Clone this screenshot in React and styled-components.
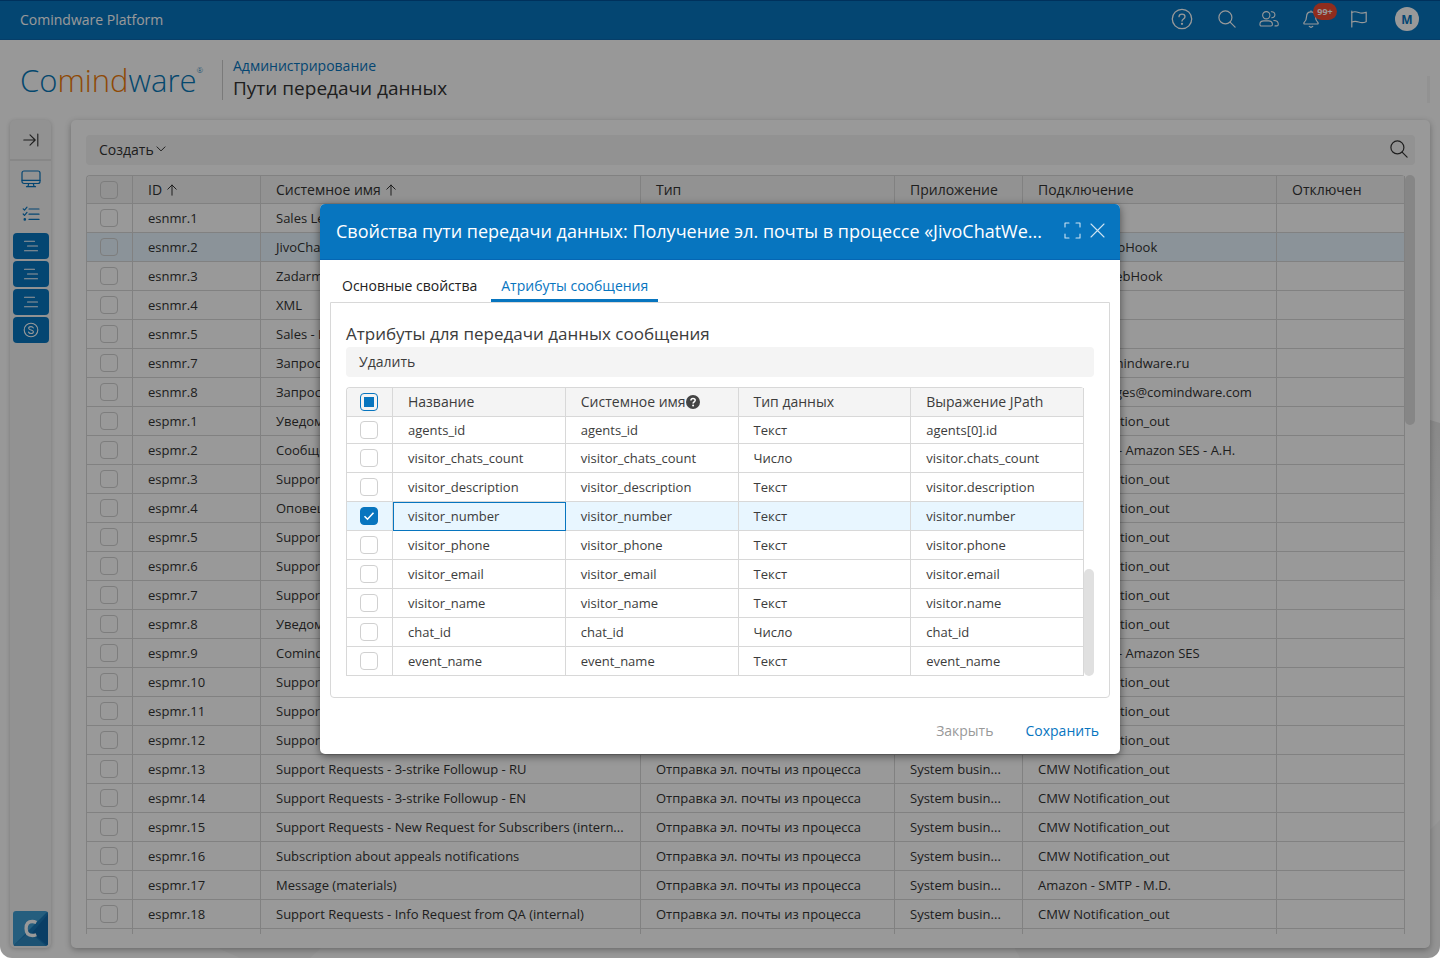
import React from "react";
import styled, { createGlobalStyle, css } from "styled-components";

const GlobalStyle = createGlobalStyle`
  *, *::before, *::after { box-sizing: border-box; }
  html, body { margin: 0; padding: 0; background: #fff; }
  body {
    font-family: "Open Sans", "Noto Sans", sans-serif;
    font-size: 13px;
    color: #333;
  }
  button { font: inherit; color: inherit; border: 0; background: none; padding: 0; }
  h1, h2, h3 { margin: 0; font-weight: 400; }
  a { text-decoration: none; }
`;

/* ---------- page frame ---------- */

const Frame = styled.div`
  position: relative;
  display: flex;
  flex-direction: column;
  height: calc(100vh - 1px);
  min-height: 760px;
  overflow: hidden;
  border-radius: 0 0 12px 12px;
  background: #fdfdfd;
`;

const Backdrop = styled.svg`
  position: absolute;
  inset: 0;
  width: 100%;
  height: 100%;
`;

const TopBar = styled.header`
  position: relative;
  display: flex;
  align-items: center;
  justify-content: space-between;
  flex: none;
  height: 40px;
  padding: 0 21px 2px 20px;
  background: #0775bf;
  border-top: 1px solid #00529a;
  border-bottom: 1px solid #0a68b0;
  color: #fff;
  font-size: 14px;
`;

const TopActions = styled.nav`
  display: flex;
  align-items: center;
  gap: 20px;
`;

const IconButton = styled.button`
  position: relative;
  display: flex;
  align-items: center;
  justify-content: center;
  width: ${(p) => p.$w || 24}px;
  height: 24px;
`;

const Badge = styled.span`
  position: absolute;
  left: 14px;
  top: -4px;
  width: 24px;
  height: 17px;
  border-radius: 9px;
  background: #f04b32;
  font-size: 9px;
  font-weight: 700;
  line-height: 17px;
  text-align: center;
`;

const Avatar = styled.button`
  width: 24px;
  height: 24px;
  border-radius: 50%;
  background: #fff;
  color: #0775bf;
  font-size: 12px;
  font-weight: 700;
`;

const PageHeader = styled.div`
  position: relative;
  display: flex;
  align-items: center;
  flex: none;
  height: 80px;
  padding-left: 20px;
`;

const Logo = styled.div`
  display: flex;
  align-items: flex-start;
  width: 202px;
  font-size: 31px;
  font-weight: 300;
  line-height: 40px;
  color: #0878b8;
`;

const LogoAccent = styled.span`
  color: #ee7a08;
`;

const Registered = styled.small`
  font-size: 8px;
  line-height: 20px;
`;

const Titles = styled.div`
  height: 40px;
  display: flex;
  flex-direction: column;
  justify-content: center;
  padding-left: 10px;
  padding-bottom: 3px;
  border-left: 1px solid #ccc;
`;

const Crumb = styled.a`
  font-size: 14px;
  line-height: 20px;
  color: #0775bf;
`;

const PageTitle = styled.h1`
  font-size: 19px;
  line-height: 25px;
`;

const HeaderGrip = styled.span`
  width: 3px;
  height: 27px;
  margin-left: auto;
  margin-right: 10px;
  margin-top: 18px;
  background: #f3f3f3;
`;

const Body = styled.div`
  position: relative;
  display: flex;
  flex: 1;
  min-height: 0;
  gap: 20px;
  padding: 0 10px 10px;
`;

/* ---------- sidebar ---------- */

const Sidebar = styled.nav`
  display: flex;
  flex-direction: column;
  align-items: center;
  flex: none;
  width: 41px;
  padding-bottom: 2px;
  border-radius: 5px;
  background: #f3f3f3;
  box-shadow: 0 1px 4px rgba(0, 0, 0, 0.2);
`;

const SideToggle = styled.button`
  display: flex;
  align-items: center;
  justify-content: center;
  width: 100%;
  height: 41px;
  border-bottom: 2px solid #e2e2e2;
`;

const SideIcon = styled.button`
  display: flex;
  align-items: center;
  justify-content: center;
  width: 36px;
  height: 35px;
  color: #0775bf;
`;

const SideTile = styled.button`
  display: flex;
  align-items: center;
  justify-content: center;
  width: 36px;
  height: 26px;
  margin-top: 2px;
  border-radius: 4px;
  background: #0775bf;
  color: #fff;
`;

const Brand = styled.a`
  display: block;
  width: 35px;
  height: 35px;
  margin-top: auto;
`;

/* ---------- main panel ---------- */

const Panel = styled.main`
  display: flex;
  flex-direction: column;
  flex: 1;
  min-width: 0;
  padding: 15px 15px 14px;
  border-radius: 5px;
  background: #fff;
  box-shadow: 0 2px 6px rgba(0, 0, 0, 0.3);
`;

const Toolbar = styled.div`
  display: flex;
  align-items: center;
  justify-content: space-between;
  flex: none;
  height: 30px;
  padding: 0 7px 2px 13px;
  border-radius: 4px;
  background: #f4f4f4;
  font-size: 14px;
`;

const ToolButton = styled.button`
  display: flex;
  align-items: center;
  gap: 2px;
`;

const GridArea = styled.div`
  display: flex;
  flex: 1;
  min-height: 0;
  margin-top: 10px;
  overflow: hidden;
`;

const Table = styled.table`
  flex: 1;
  width: 100%;
  min-width: 0;
  align-self: flex-start;
  table-layout: fixed;
  border-spacing: 0;
  border-top: 1px solid #d8d8d8;
  border-left: 1px solid #d8d8d8;
  border-radius: 4px 4px 0 0;
`;

const HeadCell = styled.th`
  height: ${(p) => (p.$compact ? 28 : 29)}px;
  padding: 0 15px;
  border-right: 1px solid #d8d8d8;
  border-bottom: 1px solid #d8d8d8;
  background: #f4f4f4;
  font-size: 14px;
  font-weight: 400;
  line-height: 20px;
  text-align: left;
  white-space: nowrap;
`;

const HeadLabel = styled.span`
  display: flex;
  align-items: center;
  gap: ${(p) => p.$gap || 0}px;
`;

const Row = styled.tr`
  background: ${(p) => (p.$selected ? "#e8f6ff" : "transparent")};
`;

const Cell = styled.td`
  height: ${(p) => (p.$clipped ? 27 : 29)}px;
  padding: 0 15px;
  border-right: 1px solid #d8d8d8;
  border-bottom: 1px solid #d8d8d8;
  font-size: 13px;
  line-height: 18px;
  white-space: nowrap;
  overflow: hidden;
  text-overflow: ellipsis;
  ${(p) =>
    p.$focused &&
    css`
      outline: 1px solid #0775bf;
      outline-offset: -1px;
    `}
`;

const checkSvg =
  "url(\"data:image/svg+xml,%3Csvg xmlns='http://www.w3.org/2000/svg' viewBox='0 0 18 18'%3E%3Cpath d='M4.5 9.2l3 3 6-6.4' fill='none' stroke='white' stroke-width='1.6'/%3E%3C/svg%3E\")";

const Check = styled.input.attrs({ type: "checkbox" })`
  appearance: none;
  display: block;
  width: 18px;
  height: 18px;
  margin: 0 auto;
  border: 1px solid #d0d0d0;
  border-radius: 4px;
  &:checked {
    border-color: #0775bf;
    background: #0775bf ${checkSvg} center / 18px 18px no-repeat;
  }
  &:indeterminate {
    border-color: #0775bf;
    background: linear-gradient(#0775bf, #0775bf) center / 10px 10px no-repeat;
  }
`;

const CheckCell = styled(Cell)`
  padding: 0 1px 0 0;
`;

const CheckHead = styled(HeadCell)`
  padding: 0 1px 0 0;
  border-radius: 4px 0 0 0;
`;

const Scroll = styled.div`
  display: flex;
  flex-direction: column;
  justify-content: ${(p) => (p.$end ? "flex-end" : "flex-start")};
  flex: none;
  width: 10px;
`;

const Thumb = styled.span`
  height: ${(p) => p.$size}px;
  border-radius: 5px;
  background: #e0e0e0;
`;

/* ---------- dialog ---------- */

const Overlay = styled.div`
  position: absolute;
  inset: 0;
  display: flex;
  align-items: center;
  justify-content: center;
  background: rgba(0, 0, 0, 0.4);
`;

const Dialog = styled.section`
  display: flex;
  flex-direction: column;
  width: 800px;
  max-width: 100%;
  border-radius: 5px;
  overflow: hidden;
  background: #fff;
  color: #3c3c3c;
  box-shadow: 0 2px 8px rgba(0, 0, 0, 0.5);
`;

const DialogHeader = styled.header`
  display: flex;
  align-items: center;
  gap: 8px;
  height: 56px;
  padding: 0 14px 2px 16px;
  background: #0775bf;
  border-bottom: 1px solid #0566b3;
  color: #fff;
`;

const DialogTitle = styled.h2`
  flex: 1;
  min-width: 0;
  font-size: 18px;
  line-height: 26px;
  white-space: nowrap;
  overflow: hidden;
`;

const HeaderButton = styled.button`
  display: flex;
  align-items: center;
  justify-content: center;
  width: 17px;
  height: 18px;
  opacity: 0.8;
`;

const Tabs = styled.div`
  display: flex;
  height: 42px;
  padding: 12px 12px 0;
`;

const Tab = styled.button`
  padding: 0 10px;
  font-size: 14px;
  line-height: 20px;
  color: ${(p) => (p.$active ? "#0775bf" : "#222")};
  border-bottom: 3px solid ${(p) => (p.$active ? "#0775bf" : "transparent")};
  margin-right: 4px;
`;

const TabPanel = styled.div`
  margin: 0 10px;
  padding: 18px 15px 21px;
  border: 1px solid #d8d8d8;
  border-radius: 0 0 4px 4px;
`;

const SectionTitle = styled.h3`
  font-size: 17px;
  line-height: 26px;
`;

const Footer = styled.footer`
  display: flex;
  align-items: center;
  justify-content: flex-end;
  gap: 32px;
  height: 56px;
  padding: 10px 21px 0 0;
`;

const FooterButton = styled.button`
  font-size: 14px;
  line-height: 20px;
  color: ${(p) => (p.$primary ? "#0775bf" : "#999")};
`;

/* ---------- icons ---------- */

const Svg = ({ w, h, sw = 1.2, children }) => (
  <svg
    width={w}
    height={h}
    viewBox={`0 0 ${w} ${h}`}
    fill="none"
    stroke="currentColor"
    strokeWidth={sw}
    strokeLinecap="round"
    strokeLinejoin="round"
    aria-hidden="true"
  >
    {children}
  </svg>
);

const HelpIcon = () => (
  <Svg w={22} h={22} sw={1.3}>
    <circle cx="11" cy="11" r="9.7" />
    <path d="M8 8.700c.1-1.700 1.300-2.500 3-2.500s3 1 3 2.500c0 2.300-3 2.200-3 4.400" />
    <circle cx="11" cy="15.800" r=".5" fill="currentColor" />
  </Svg>
);

const SearchIcon = () => (
  <Svg w={18} h={18}>
    <circle cx="7.400" cy="7.400" r="6.500" />
    <path d="M12.100 12.100l5 5" />
  </Svg>
);

const UsersIcon = () => (
  <Svg w={22} h={18}>
    <circle cx="8" cy="4.900" r="4" />
    <path d="M1 14.800c0-2.400 1.900-3.700 4.300-3.700h5.200c2.400 0 4.300 1.300 4.300 3.700 0 1.300-.6 1.900-1.700 1.900H2.700C1.600 16.700 1 16.100 1 14.800z" />
    <path d="M13.500 1c2.300-.3 4 1.300 4 3.300s-1.400 3.500-3.500 3.400" />
    <path d="M16.300 10.600c2.700 0 4.900 1.600 4.900 4.100 0 1.300-.6 1.900-1.600 1.900h-2" />
  </Svg>
);

const BellIcon = () => (
  <Svg w={18} h={18}>
    <path d="M9 1.800C6.200 1.800 4.700 3.900 4.600 6.200c-.1 3.400-.7 4.700-2.400 6.200-.7.7-.4 1.600.5 1.600h12.600c.9 0 1.200-.9.500-1.600-1.700-1.500-2.300-2.800-2.400-6.200C13.300 3.900 11.800 1.800 9 1.800zM9 1.800V.9" />
    <path d="M7.300 16.400c.9.900 2.500.9 3.400 0" />
  </Svg>
);

const FlagIcon = () => (
  <Svg w={18} h={18}>
    <path d="M1.800 1v16" />
    <path d="M1.800 2.500c2.300-1.200 4.500-.9 6.900 0 2.500.9 4.700.8 7.500-.3v9.500c-2.700 1.200-5 1.200-7.500.3-2.400-.9-4.600-1-6.900 0" />
  </Svg>
);

const ChevronDown = () => (
  <Svg w={10} h={6} sw={1}>
    <path d="M1 .9l4 4 4-4" />
  </Svg>
);

const ArrowUp = () => (
  <Svg w={10} h={12} sw={1}>
    <path d="M5 11.200V1M.8 5.200L5 1l4.200 4.200" />
  </Svg>
);

const CollapseIcon = () => (
  <Svg w={16} h={14} sw={1.1}>
    <path d="M.8 7h11M7 1.800L12.200 7 7 12.200M14.800 1v12" />
  </Svg>
);

const MonitorIcon = () => (
  <Svg w={20} h={18}>
    <rect x="1" y="1" width="18" height="12.500" rx="2" />
    <path d="M1 10.300h18M7.700 13.500L7 16.300M12.300 13.500l.7 2.800M5.500 16.700h9" />
  </Svg>
);

const ChecklistIcon = () => (
  <Svg w={18} h={16}>
    <path d="M7 3h10M7 8.200h10M7 13.400h10M1.200 2.800l1.300 1.300L5 1.200M1.200 8l1.300 1.300L5 6.400" />
    <circle cx="2.800" cy="13.400" r=".7" fill="currentColor" />
  </Svg>
);

const LinesIcon = () => (
  <Svg w={16} h={12} sw={1.1}>
    <path d="M1.500 1.200h10M4.500 6h10M1.500 10.800h13" />
  </Svg>
);

const CoinIcon = () => (
  <Svg w={16} h={16} sw={1.1}>
    <circle cx="8" cy="8" r="6.800" />
    <path d="M10.300 5.900C9.900 5 9.100 4.600 8 4.600c-1.300 0-2.300.6-2.300 1.700C5.700 8.600 10.400 7.300 10.400 9.700c0 1.100-1 1.800-2.400 1.800-1.200 0-2.100-.5-2.500-1.500" />
  </Svg>
);

const BrandIcon = () => (
  <svg width="35" height="35" viewBox="0 0 35 35" aria-hidden="true">
    <defs>
      <clipPath id="brandClip">
        <rect width="35" height="35" rx="3" />
      </clipPath>
    </defs>
    <g clipPath="url(#brandClip)">
      <rect width="35" height="35" fill="#3f9dd3" />
      <path d="M35 0v35H0z" fill="#1a78b8" />
      <path d="M35 3v32L19 22z" fill="#1268a8" />
      <path d="M0 35l16-14 17 14z" fill="#3089c0" />
    </g>
    <path
      d="M23.300 11.500c-1.200-.6-2.500-1-4-1-4 0-6.200 2.700-6.200 7 0 4.500 2 7 6.200 7 1.500 0 2.700-.3 4-.8"
      fill="none"
      stroke="#fff"
      strokeWidth="3.300"
    />
  </svg>
);

const ExpandIcon = () => (
  <Svg w={17} h={17} sw={1.1}>
    <path d="M1 5V1h4M12 1h4v4M16 12v4h-4M5 16H1v-4" />
  </Svg>
);

const CloseIcon = () => (
  <Svg w={15} h={15} sw={1.1}>
    <path d="M1 1l13 13M14 1L1 14" />
  </Svg>
);

const HintIcon = () => (
  <svg width="14" height="14" viewBox="0 0 14 14" aria-hidden="true">
    <circle cx="7" cy="7" r="7" fill="#444" />
    <path d="M4.900 5.500C5 4.200 5.800 3.500 7 3.500c1.300 0 2.200.7 2.200 1.800C9.200 6.800 7.100 6.800 7.100 8.400" fill="none" stroke="#fff" strokeWidth="1.500" />
    <circle cx="7.100" cy="10.500" r="1" fill="#fff" />
  </svg>
);

/* ---------- data ---------- */

const OUT = "Отправка эл. почты из процесса";
const SYS = "System busin...";
const CMW = "CMW Notification_out";

const routes = [
  ["esnmr.1", "Sales Le", "", "", ""],
  ["esnmr.2", "JivoChat", "", "", "JivoChat1 WebHook"],
  ["esnmr.3", "Zadarma", "", "", "Zadarma2 WebHook"],
  ["esnmr.4", "XML", "", "", ""],
  ["esnmr.5", "Sales - I", "", "", ""],
  ["esnmr.7", "Запрос", "", "", "support@comindware.ru"],
  ["esnmr.8", "Запрос", "", "", "cmws.messages@comindware.com"],
  ["espmr.1", "Уведом", "", "", CMW],
  ["espmr.2", "Сообще", "", "", "Notifications - Amazon SES - A.H."],
  ["espmr.3", "Support", "", "", CMW],
  ["espmr.4", "Оповещ", "", "", CMW],
  ["espmr.5", "Support", "", "", CMW],
  ["espmr.6", "Support", "", "", CMW],
  ["espmr.7", "Support", "", "", CMW],
  ["espmr.8", "Уведом", "", "", CMW],
  ["espmr.9", "Comindw", "", "", "Notifications - Amazon SES"],
  ["espmr.10", "Support", "", "", CMW],
  ["espmr.11", "Support", "", "", CMW],
  ["espmr.12", "Support", "", "", CMW],
  ["espmr.13", "Support Requests - 3-strike Followup - RU", OUT, SYS, CMW],
  ["espmr.14", "Support Requests - 3-strike Followup - EN", OUT, SYS, CMW],
  ["espmr.15", "Support Requests - New Request for Subscribers (intern...", OUT, SYS, CMW],
  ["espmr.16", "Subscription about appeals notifications", OUT, SYS, CMW],
  ["espmr.17", "Message (materials)", OUT, SYS, "Amazon - SMTP - M.D."],
  ["espmr.18", "Support Requests - Info Request from QA (internal)", OUT, SYS, CMW],
];

const attributes = [
  ["agents_id", "Текст", "agents[0].id"],
  ["visitor_chats_count", "Число", "visitor.chats_count"],
  ["visitor_description", "Текст", "visitor.description"],
  ["visitor_number", "Текст", "visitor.number"],
  ["visitor_phone", "Текст", "visitor.phone"],
  ["visitor_email", "Текст", "visitor.email"],
  ["visitor_name", "Текст", "visitor.name"],
  ["chat_id", "Число", "chat_id"],
  ["event_name", "Текст", "event_name"],
];

const Col = styled.col`
  width: ${(p) => (p.$w ? `${p.$w}px` : "auto")};
`;

/* ---------- sections ---------- */

const RoutesTable = () => (
  <Table>
    <colgroup>
      <Col $w={46} />
      <Col $w={128} />
      <Col />
      <Col $w={254} />
      <Col $w={128} />
      <Col $w={254} />
      <Col $w={128} />
    </colgroup>
    <thead>
      <tr>
        <CheckHead $compact>
          <Check aria-label="Выбрать все" />
        </CheckHead>
        <HeadCell $compact>
          <HeadLabel $gap={5}>ID <ArrowUp /></HeadLabel>
        </HeadCell>
        <HeadCell $compact>
          <HeadLabel $gap={5}>Системное имя <ArrowUp /></HeadLabel>
        </HeadCell>
        <HeadCell $compact>Тип</HeadCell>
        <HeadCell $compact>Приложение</HeadCell>
        <HeadCell $compact>Подключение</HeadCell>
        <HeadCell $compact>Отключен</HeadCell>
      </tr>
    </thead>
    <tbody>
      {routes.map(([id, name, type, app, conn]) => (
        <Row key={id} $selected={id === "esnmr.2"}>
          <CheckCell>
            <Check aria-label={id} />
          </CheckCell>
          <Cell>{id}</Cell>
          <Cell>{name}</Cell>
          <Cell>{type}</Cell>
          <Cell>{app}</Cell>
          <Cell>{conn}</Cell>
          <Cell />
        </Row>
      ))}
      <Row>
        <CheckCell />
        <Cell />
        <Cell />
        <Cell />
        <Cell />
        <Cell />
        <Cell />
      </Row>
    </tbody>
  </Table>
);

const AttributesTable = () => (
  <Table>
    <colgroup>
      <Col $w={46} />
      <Col />
      <Col />
      <Col />
      <Col />
    </colgroup>
    <thead>
      <tr>
        <CheckHead>
          <Check
            aria-label="Выбрать все"
            ref={(el) => {
              if (el) el.indeterminate = true;
            }}
          />
        </CheckHead>
        <HeadCell>Название</HeadCell>
        <HeadCell>
          <HeadLabel>Системное имя<HintIcon /></HeadLabel>
        </HeadCell>
        <HeadCell>Тип данных</HeadCell>
        <HeadCell>Выражение JPath</HeadCell>
      </tr>
    </thead>
    <tbody>
      {attributes.map(([name, type, path], i) => {
        const selected = name === "visitor_number";
        return (
          <Row key={name} $selected={selected}>
            <CheckCell $clipped={i === 0}>
              <Check aria-label={name} defaultChecked={selected} />
            </CheckCell>
            <Cell $clipped={i === 0} $focused={selected}>{name}</Cell>
            <Cell $clipped={i === 0}>{name}</Cell>
            <Cell $clipped={i === 0}>{type}</Cell>
            <Cell $clipped={i === 0}>{path}</Cell>
          </Row>
        );
      })}
    </tbody>
  </Table>
);

export default function App() {
  return (
    <>
      <GlobalStyle />
      <Frame>
        <Backdrop viewBox="0 0 1440 958" preserveAspectRatio="none" aria-hidden="true">
          <defs>
            <linearGradient id="fold" x1="0" y1="0" x2="0" y2="1">
              <stop offset="0" stopColor="#e4e4e4" />
              <stop offset="1" stopColor="#f8f8f8" />
            </linearGradient>
          </defs>
          <path d="M1380 405L1440 423V600H1380z" fill="url(#fold)" />
          <path d="M1440 820L1380 880V958H1440z" fill="#f5f5f5" />
          <path d="M200 940L240 958H310L330 940z" fill="#f7f7f7" />
          <path d="M1010 940h120v18H1020z" fill="#f7f7f7" />
        </Backdrop>

        <TopBar>
          <span>Comindware Platform</span>
          <TopActions>
            <IconButton $w={26} aria-label="Справка"><HelpIcon /></IconButton>
            <IconButton aria-label="Поиск"><SearchIcon /></IconButton>
            <IconButton $w={20} aria-label="Пользователи"><UsersIcon /></IconButton>
            <IconButton aria-label="Уведомления">
              <BellIcon />
              <Badge>99+</Badge>
            </IconButton>
            <IconButton $w={32} aria-label="Задачи"><FlagIcon /></IconButton>
            <Avatar>M</Avatar>
          </TopActions>
        </TopBar>

        <PageHeader>
          <Logo>
            <span>Co<LogoAccent>mind</LogoAccent>ware</span>
            <Registered>®</Registered>
          </Logo>
          <Titles>
            <Crumb href="#admin">Администрирование</Crumb>
            <PageTitle>Пути передачи данных</PageTitle>
          </Titles>
          <HeaderGrip />
        </PageHeader>

        <Body>
          <Sidebar>
            <SideToggle aria-label="Развернуть меню"><CollapseIcon /></SideToggle>
            <SideIcon aria-label="Рабочий стол"><MonitorIcon /></SideIcon>
            <SideIcon aria-label="Задачи"><ChecklistIcon /></SideIcon>
            <SideTile aria-label="Раздел 1"><LinesIcon /></SideTile>
            <SideTile aria-label="Раздел 2"><LinesIcon /></SideTile>
            <SideTile aria-label="Раздел 3"><LinesIcon /></SideTile>
            <SideTile aria-label="Продажи"><CoinIcon /></SideTile>
            <Brand href="#home" aria-label="Comindware"><BrandIcon /></Brand>
          </Sidebar>

          <Panel>
            <Toolbar>
              <ToolButton>Создать<ChevronDown /></ToolButton>
              <ToolButton aria-label="Поиск"><SearchIcon /></ToolButton>
            </Toolbar>
            <GridArea>
              <RoutesTable />
              <Scroll><Thumb $size={250} /></Scroll>
            </GridArea>
          </Panel>
        </Body>

        <Overlay>
          <Dialog role="dialog" aria-labelledby="dialog-title">
            <DialogHeader>
              <DialogTitle id="dialog-title">
                Свойства пути передачи данных: Получение эл. почты в процессе «JivoChatWe...
              </DialogTitle>
              <HeaderButton aria-label="Развернуть"><ExpandIcon /></HeaderButton>
              <HeaderButton aria-label="Закрыть окно"><CloseIcon /></HeaderButton>
            </DialogHeader>
            <Tabs role="tablist">
              <Tab role="tab">Основные свойства</Tab>
              <Tab role="tab" aria-selected="true" $active>Атрибуты сообщения</Tab>
            </Tabs>
            <TabPanel role="tabpanel">
              <SectionTitle>Атрибуты для передачи данных сообщения</SectionTitle>
              <Toolbar>
                <ToolButton>Удалить</ToolButton>
              </Toolbar>
              <GridArea>
                <AttributesTable />
                <Scroll $end><Thumb $size={107} /></Scroll>
              </GridArea>
            </TabPanel>
            <Footer>
              <FooterButton>Закрыть</FooterButton>
              <FooterButton $primary>Сохранить</FooterButton>
            </Footer>
          </Dialog>
        </Overlay>
      </Frame>
    </>
  );
}
